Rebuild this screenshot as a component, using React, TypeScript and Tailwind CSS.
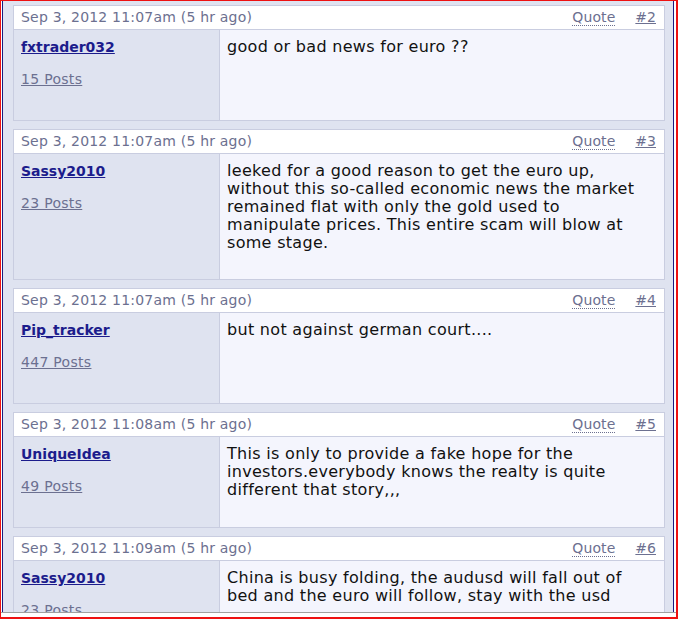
import React from "react";

type Post = {
  date: string;
  num: string;
  user: string;
  posts: string;
  lines: string[];
};

const data: Post[] = [
  {
    date: "Sep 3, 2012 11:07am (5 hr ago)",
    num: "#2",
    user: "fxtrader032",
    posts: "15 Posts",
    lines: ["good or bad news for euro ??"],
  },
  {
    date: "Sep 3, 2012 11:07am (5 hr ago)",
    num: "#3",
    user: "Sassy2010",
    posts: "23 Posts",
    lines: [
      "leeked for a good reason to get the euro up,",
      "without this so-called economic news the market",
      "remained flat with only the gold used to",
      "manipulate prices. This entire scam will blow at",
      "some stage.",
    ],
  },
  {
    date: "Sep 3, 2012 11:07am (5 hr ago)",
    num: "#4",
    user: "Pip_tracker",
    posts: "447 Posts",
    lines: ["but not against german court...."],
  },
  {
    date: "Sep 3, 2012 11:08am (5 hr ago)",
    num: "#5",
    user: "UniqueIdea",
    posts: "49 Posts",
    lines: [
      "This is only to provide a fake hope for the",
      "investors.everybody knows the realty is quite",
      "different that story,,,",
    ],
  },
  {
    date: "Sep 3, 2012 11:09am (5 hr ago)",
    num: "#6",
    user: "Sassy2010",
    posts: "23 Posts",
    lines: [
      "China is busy folding, the audusd will fall out of",
      "bed and the euro will follow, stay with the usd",
    ],
  },
];

const font = { fontFamily: '"DejaVu Sans", Tahoma, Verdana, sans-serif' };

function PostBox({ p }: { p: Post }) {
  return (
    <div className="border border-[#c9cde0] shrink-0">
      <div className="h-[23px] bg-white flex items-center justify-between pl-[7px] pr-[8px] text-[14px] text-[#6c7090]">
        <span className="tracking-[0.2px]">{p.date}</span>
        <div className="flex items-center gap-[20px]">
          <span className="border-b border-dotted border-[#6c7090] leading-[15px] tracking-[0.1px]">Quote</span>
          <span className="underline">{p.num}</span>
        </div>
      </div>
      <div className="flex border-t border-[#c9cde0]">
        <div className="w-[206px] shrink-0 bg-[#dfe3f0] border-r border-[#c9cde0] min-h-[90px] pl-[7px] pt-[9px]">
          <div className="text-[14px] font-bold text-[#1c1c8c] underline leading-[16px]">{p.user}</div>
          <div className="text-[14px] text-[#6c7090] underline leading-[16px] mt-[16px] tracking-[0.3px]">{p.posts}</div>
        </div>
        <div className="flex-1 bg-[#f4f5fd] pl-[7px] pt-[8px] pb-[27px] text-[16px] leading-[18px] text-[#111] tracking-[0.3px]">
          {p.lines.map((l, i) => (
            <div key={i} className="whitespace-nowrap">{l}</div>
          ))}
        </div>
      </div>
    </div>
  );
}

export default function App() {
  return (
    <div
      className="w-[678px] h-[619px] bg-white border-l border-t border-r-2 border-b-2 border-[#ee1111] flex flex-col overflow-hidden"
      style={font}
    >
      <div className="h-[611px] ml-[1px] mr-[2px] border-x border-[#1a1a80] bg-[#dfe3f0] overflow-hidden">
        <div className="flex flex-col gap-[8px] pt-[4px] pl-[10px] pr-[8px]">
          {data.map((p, i) => (
            <PostBox key={i} p={p} />
          ))}
        </div>
      </div>
      <div className="h-[1px] bg-[#a0a0a0]" />
      <div className="flex-1 bg-white" />
    </div>
  );
}
